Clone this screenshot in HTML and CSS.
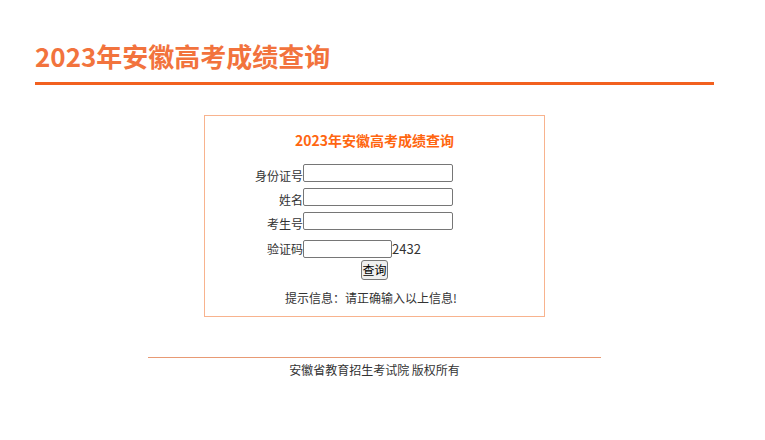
FILE: index.html
```html
<!DOCTYPE html>
<html lang="zh-CN">
<head>
<meta charset="utf-8">
<title>2023年安徽高考成绩查询</title>
<link rel="stylesheet" href="styles.css">
</head>
<body>
<div class="page">
  <header class="header">
    <h1 class="site-title">2023年安徽高考成绩查询</h1>
  </header>
  <main class="query-box">
    <div class="box-title">2023年安徽高考成绩查询</div>
    <form class="query-form">
      <div class="row">
        <label class="label">身份证号</label>
        <input class="field" type="text">
      </div>
      <div class="row">
        <label class="label">姓名</label>
        <input class="field" type="text">
      </div>
      <div class="row">
        <label class="label">考生号</label>
        <input class="field" type="text">
      </div>
      <div class="row row-captcha">
        <label class="label label-captcha">验证码</label>
        <input class="field field-short" type="text">
        <span class="captcha">2432</span>
      </div>
      <div class="actions">
        <button class="btn" type="button">查询</button>
      </div>
      <div class="hint">提示信息：请正确输入以上信息!</div>
    </form>
  </main>
  <footer class="footer">
    <div class="footer-line"></div>
    <div class="footer-text">安徽省教育招生考试院 版权所有</div>
  </footer>
</div>
</body>
</html>
```

FILE: styles.css
```css
html, body {
  margin: 0;
  padding: 0;
  background: #ffffff;
}

body {
  font-family: "Noto Sans CJK SC", "Noto Sans", sans-serif;
  color: #333333;
  font-size: 12px;
}

.page {
  width: 679px;
  margin-left: 35px;
  padding-top: 38px;
}

.header {
  border-bottom: 3px solid #f2601f;
  padding-bottom: 8px;
}

.site-title {
  margin: 0;
  font-size: 26px;
  line-height: 36px;
  font-weight: bold;
  color: #f2733d;
}

.query-box {
  width: 339px;
  margin: 30px 0 0 169px;
  border: 1px solid #f8b38e;
  padding: 14px 0 10px;
}

.box-title {
  text-align: center;
  font-size: 14px;
  line-height: 20px;
  font-weight: bold;
  color: #ff6610;
}

.query-form {
  margin: 14px 0 0;
}

.row {
  display: flex;
  align-items: flex-start;
  height: 24px;
}

.row-captcha {
  margin-top: 4px;
  height: 18px;
}

.label {
  width: 98px;
  text-align: right;
  line-height: 16px;
  padding-top: 4px;
  color: #333333;
}

.label-captcha {
  padding-top: 1px;
}

.field {
  box-sizing: border-box;
  width: 150px;
  height: 18px;
  margin: 0;
  padding: 1px 2px;
  border: 1px solid #767676;
  border-radius: 2px;
  font-family: inherit;
  font-size: 12px;
  background: #fff;
}

.field-short {
  width: 89px;
}

.captcha {
  line-height: 16px;
  padding-top: 1px;
  font-size: 13px;
  color: #333333;
}

.actions {
  display: flex;
  justify-content: center;
  margin-top: 2px;
}

.btn {
  box-sizing: border-box;
  height: 20px;
  width: 27px;
  margin: 0;
  padding: 0;
  border: 1px solid #767676;
  border-radius: 3px;
  background: #efefef;
  font-family: inherit;
  font-size: 12px;
  line-height: 16px;
  color: #000;
}

.hint {
  margin-top: 10px;
  text-align: center;
  line-height: 16px;
  color: #333333;
  padding-right: 7px;
}

.footer {
  width: 453px;
  margin: 40px 0 0 113px;
}

.footer-line {
  height: 1px;
  background: #e89a74;
}

.footer-text {
  text-align: center;
  line-height: 16px;
  margin-top: 4px;
  color: #333333;
}
```
